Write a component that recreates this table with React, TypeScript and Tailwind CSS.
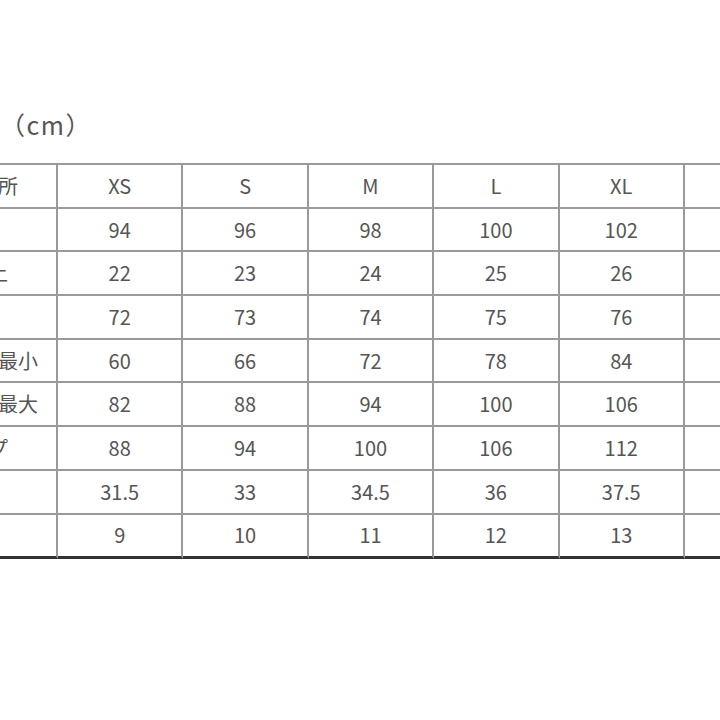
const sizes = ['XS', 'S', 'M', 'L', 'XL', '']

const rows: { label: string; values: string[] }[] = [
  { label: '着丈', values: ['94', '96', '98', '100', '102', ''] },
  { label: '前股上', values: ['22', '23', '24', '25', '26', ''] },
  { label: '股下', values: ['72', '73', '74', '75', '76', ''] },
  { label: 'ウエスト最小', values: ['60', '66', '72', '78', '84', ''] },
  { label: 'ウエスト最大', values: ['82', '88', '94', '100', '106', ''] },
  { label: 'ヒップ', values: ['88', '94', '100', '106', '112', ''] },
  { label: '渡り', values: ['31.5', '33', '34.5', '36', '37.5', ''] },
  { label: '裾幅', values: ['9', '10', '11', '12', '13', ''] },
]

export default function App() {
  const cell =
    'h-[43.7px] flex items-center justify-center border-r-2 border-b-2 border-[#9a9a9a] text-[20px] text-[#555] whitespace-nowrap overflow-hidden'
  const lastCell =
    'h-[44.7px] flex items-center justify-center border-r-2 border-b-[3px] border-r-[#9a9a9a] border-b-[#333] text-[20px] text-[#555] whitespace-nowrap overflow-hidden'

  return (
    <div
      className="w-[720px] h-[720px] overflow-hidden bg-white"
      style={{ fontFamily: '"Noto Sans CJK JP", "Noto Sans", sans-serif' }}
    >
      {/* unit caption */}
      <div className="pt-[106px] h-[163px] text-[25px] leading-[36px] text-[#555] tracking-[0.06em]">
        （cm）
      </div>

      {/* size table */}
      <div className="ml-[-100px] w-[910px] grid grid-cols-[158px_repeat(6,125.4px)] border-t-2 border-[#9a9a9a]">
        <div className={cell}>採寸箇所</div>
        {sizes.map((s, j) => (
          <div key={'h' + j} className={cell}>
            {s}
          </div>
        ))}
        {rows.map((r, i) => {
          const c = i === rows.length - 1 ? lastCell : cell
          return [
            <div key={r.label} className={c}>
              {r.label}
            </div>,
            ...r.values.map((v, j) => (
              <div key={r.label + j} className={c}>
                {v}
              </div>
            )),
          ]
        })}
      </div>
    </div>
  )
}
